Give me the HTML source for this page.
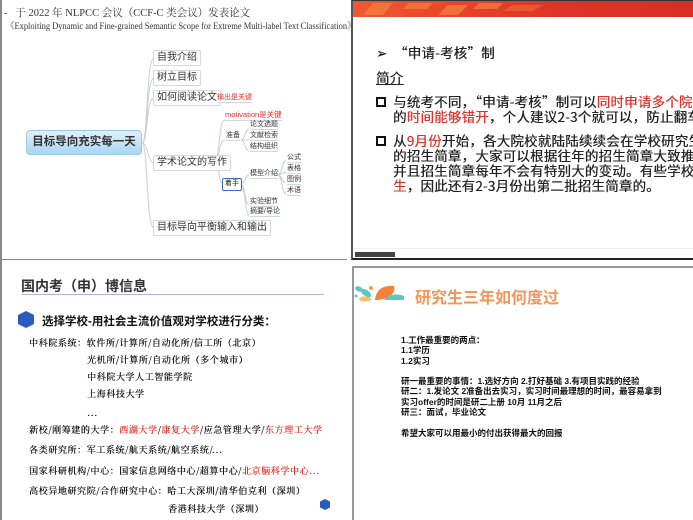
<!DOCTYPE html>
<html><head><meta charset="utf-8">
<style>
*{margin:0;padding:0;box-sizing:border-box}
body{width:693px;height:520px;overflow:hidden;background:#fff;position:relative;font-family:"Liberation Sans","Noto Sans CJK SC",sans-serif;color:#222}
.a{position:absolute;white-space:nowrap}
.ser{font-family:"Liberation Serif","Noto Serif CJK SC",serif}
.nd{position:absolute;border:1px solid #d8d8d8;border-radius:2px;background:#fff;font-size:10px;color:#333;padding:1px 3px;white-space:nowrap;line-height:12px}
.sm{position:absolute;font-size:7px;color:#333;white-space:nowrap;line-height:9px;border-bottom:1px solid #cfd8e0}
.tr{font-family:"Noto Sans CJK SC",sans-serif;font-size:13.5px;line-height:15px;font-weight:normal;color:#222;letter-spacing:0.2px;text-shadow:0.3px 0 0 currentColor}
.r{color:#e0322a}
.bl{font-family:"Noto Serif CJK SC",serif;font-size:9px;letter-spacing:0.6px;color:#111;text-shadow:0.3px 0 0 currentColor}
.br{font-size:8.5px;color:#111;line-height:10.3px;font-weight:bold}
</style></head><body>
<!-- TL -->
<div class="a" style="left:0;top:0;width:347px;height:260px;border-left:2px solid #888;border-bottom:1px solid #888;overflow:hidden"></div>
<div class="a ser" style="left:4px;top:5px;font-size:10.5px;color:#333">-&nbsp;&nbsp;&nbsp;于 2022 年 NLPCC 会议（CCF-C 类会议）发表论文</div>
<div class="a ser" style="left:6px;top:18px;font-size:9.6px;color:#333;transform:scaleX(0.88);transform-origin:0 0">《Exploiting Dynamic and Fine-grained Semantic Scope for Extreme Multi-label Text Classification》</div>
<svg class="a" style="left:0;top:0" width="346" height="258">
<g fill="none" stroke="#c8cfd6" stroke-width="1">
<path d="M142 143 C148 143 146 58 154 58"/>
<path d="M142 143 C148 143 146 78 154 78"/>
<path d="M142 143 C148 143 146 98 154 98"/>
<path d="M142 143 C148 143 148 163 154 163"/>
<path d="M142 143 C148 143 146 228 154 228"/>
<path d="M208 97 L215 97"/>
<path d="M214 163 C220 163 218 120 225 120"/>
<path d="M214 163 C220 163 218 140 225 140"/>
<path d="M214 163 C220 163 218 184 223 184"/>
<path d="M241 140 C245 140 245 129 249 129"/>
<path d="M241 140 L249 140"/>
<path d="M241 140 C245 140 245 151 249 151"/>
<path d="M241 184 C245 184 245 175 249 175"/>
<path d="M241 184 C245 184 245 205 249 205"/>
<path d="M241 184 C245 184 245 215 249 215"/>
<path d="M278 175 C282 175 282 161 286 161"/>
<path d="M278 175 L286 172"/>
<path d="M278 175 C282 175 282 183 286 183"/>
<path d="M278 175 C282 175 282 194 286 194"/>
</g></svg>
<div class="a" style="left:26px;top:130px;width:116px;height:25px;border-radius:4px;background:linear-gradient(#dff0fb,#a9d6f2);border:1px solid #9cc9e6;font-size:11.5px;font-weight:bold;color:#333;text-align:center;line-height:23px">目标导向充实每一天</div>
<div class="nd" style="left:153px;top:50px">自我介绍</div>
<div class="nd" style="left:153px;top:70px">树立目标</div>
<div class="nd" style="left:153px;top:90px">如何阅读论文</div>
<div class="a" style="left:217px;top:92px;font-size:7px;color:#e0322a;border-bottom:1px solid #cfd8e0">输出是关键</div>
<div class="nd" style="left:153px;top:155px">学术论文的写作</div>
<div class="nd" style="left:153px;top:220px">目标导向平衡输入和输出</div>
<div class="a" style="left:225px;top:109px;font-size:7.5px;color:#e0322a;border-bottom:1px solid #cfd8e0">motivation是关键</div>
<div class="sm" style="left:226px;top:131px">准备</div>
<div class="sm" style="left:250px;top:120px">论文选题</div>
<div class="sm" style="left:250px;top:131px">文献检索</div>
<div class="sm" style="left:250px;top:142px">结构组织</div>
<div class="a" style="left:222px;top:178px;width:20px;height:13px;border:1.5px solid #3a6cc0;border-radius:2px;font-size:7px;text-align:center;line-height:10px">着手</div>
<div class="sm" style="left:250px;top:169px">模型介绍</div>
<div class="sm" style="left:287px;top:153px">公式</div>
<div class="sm" style="left:287px;top:164px">表格</div>
<div class="sm" style="left:287px;top:175px">图例</div>
<div class="sm" style="left:287px;top:186px">术语</div>
<div class="sm" style="left:250px;top:197px">实验细节</div>
<div class="sm" style="left:250px;top:207px">摘要/导论</div>
<!-- TR -->
<div class="a" style="left:351px;top:0;width:342px;height:260px;border-left:2px solid #555;border-bottom:2px solid #222;border-top:1px solid #333;background:#fff"></div>
<div class="a" style="left:353px;top:1px;width:340px;height:16px;background:linear-gradient(90deg,#f05a30 0%,#e8442a 30%,#dc3526 60%,#d83024 100%)"></div>
<svg class="a" style="left:353px;top:1px" width="200" height="16"><g fill="#f47a3c" opacity=".8"><path d="M10 14 L20 2 L40 2 L30 14Z"/><path d="M50 8 L56 2 L80 2 L74 8Z"/><path d="M85 14 L95 4 L115 4 L105 14Z"/><path d="M120 8 L126 2 L150 2 L144 8Z"/><path d="M150 10 L160 4 L190 4 L180 10Z" opacity=".6"/></g></svg>
<div class="a" style="left:353px;top:248px;width:340px;height:1px;background:#eee"></div>
<div class="a" style="left:355px;top:252px;width:40px;height:5px;background:#444"></div>
<div class="a tr" style="left:376px;top:45px">➢ &nbsp;“申请-考核”制</div>
<div class="a tr" style="left:376px;top:70px;text-decoration:underline">简介</div>
<div class="a" style="left:376px;top:97px;width:10px;height:10px;border:2px solid #111"></div>
<div class="a tr" style="left:393px;top:94px">与统考不同，“申请-考核”制可以<span class="r">同时申请多个院</span></div>
<div class="a tr" style="left:393px;top:109px">的<span class="r">时间能够错开</span>，个人建议2-3个就可以，防止翻车。</div>
<div class="a" style="left:376px;top:136px;width:10px;height:10px;border:2px solid #111"></div>
<div class="a tr" style="left:393px;top:133px">从<span class="r">9月份</span>开始，各大院校就陆陆续续会在学校研究生</div>
<div class="a tr" style="left:393px;top:148px">的招生简章，大家可以根据往年的招生简章大致推测</div>
<div class="a tr" style="left:393px;top:163px">并且招生简章每年不会有特别大的变动。有些学校还</div>
<div class="a tr" style="left:393px;top:178px"><span class="r">生</span>，因此还有2-3月份出第二批招生简章的。</div>
<!-- BL -->
<div class="a" style="left:0;top:260px;width:346px;height:260px;border-left:2px solid #888"></div>
<div class="a" style="left:21px;top:276px;font-size:14px;font-weight:bold;color:#333">国内考（申）博信息</div>
<div class="a" style="left:22px;top:294px;width:302px;height:1px;background:#aab8d8"></div>
<svg class="a" style="left:18px;top:311px" width="16" height="17"><polygon points="8,0 16,4 16,13 8,17 0,13 0,4" fill="#2a5cbf"/></svg>
<div class="a" style="left:42px;top:313px;font-size:11.5px;font-weight:bold;color:#111">选择学校-用社会主流价值观对学校进行分类：</div>
<div class="a bl" style="left:29px;top:336px">中科院系统：软件所/计算所/自动化所/信工所（北京）</div>
<div class="a bl" style="left:87px;top:353px">光机所/计算所/自动化所（多个城市）</div>
<div class="a bl" style="left:87px;top:370px">中科院大学人工智能学院</div>
<div class="a bl" style="left:87px;top:387px">上海科技大学</div>
<div class="a bl" style="left:87px;top:406px">...</div>
<div class="a bl" style="left:29px;top:423px">新校/刚筹建的大学：<span class="r">西湖大学</span>/<span class="r">康复大学</span>/应急管理大学/<span class="r">东方理工大学</span></div>
<div class="a bl" style="left:29px;top:443px">各类研究所：军工系统/航天系统/航空系统/...</div>
<div class="a bl" style="left:29px;top:464px">国家科研机构/中心：国家信息网络中心/超算中心/<span class="r">北京脑科学中心...</span></div>
<div class="a bl" style="left:29px;top:484px">高校异地研究院/合作研究中心：哈工大深圳/清华伯克利（深圳）</div>
<div class="a bl" style="left:168px;top:502px">香港科技大学（深圳）</div>
<svg class="a" style="left:320px;top:499px" width="10" height="11"><polygon points="5,0 10,2.5 10,8.5 5,11 0,8.5 0,2.5" fill="#2a5cbf"/></svg>
<!-- BR -->
<div class="a" style="left:352px;top:266px;width:341px;height:254px;border-left:2px solid #999;border-top:2px solid #999"></div>
<svg class="a" style="left:354px;top:284px" width="52" height="18">
<ellipse cx="5" cy="5" rx="4" ry="2.5" fill="#5cc8c0" transform="rotate(20 5 5)"/>
<ellipse cx="12" cy="9" rx="6" ry="3" fill="#5cc8c0" transform="rotate(35 12 9)"/>
<circle cx="17" cy="4" r="2" fill="#f4a340"/>
<ellipse cx="11" cy="15" rx="6" ry="2.5" fill="#f6c16a"/>
<circle cx="2" cy="12" r="1.5" fill="#5cc8c0"/>
<path d="M21 16 C22 6 28 1 40 2 C42 8 36 16 21 16Z" fill="#f4823a"/>
<path d="M30 16 C34 10 42 9 50 12 L50 16 Z" fill="#5cc8c0"/>
</svg>
<div class="a" style="left:415px;top:284px;font-size:16px;font-weight:bold;color:#f4955a">研究生三年如何度过</div>
<div class="a br" style="left:401px;top:335px">1.工作最重要的两点：<br>1.1学历<br>1.2实习<br><br>研一最重要的事情：1.选好方向 2.打好基础 3.有项目实践的经验<br>研二：1.发论文 2准备出去实习，实习时间最理想的时间，最容易拿到<br>实习offer的时间是研二上册 10月 11月之后<br>研三：面试，毕业论文<br><br>希望大家可以用最小的付出获得最大的回报</div>
</body></html>
